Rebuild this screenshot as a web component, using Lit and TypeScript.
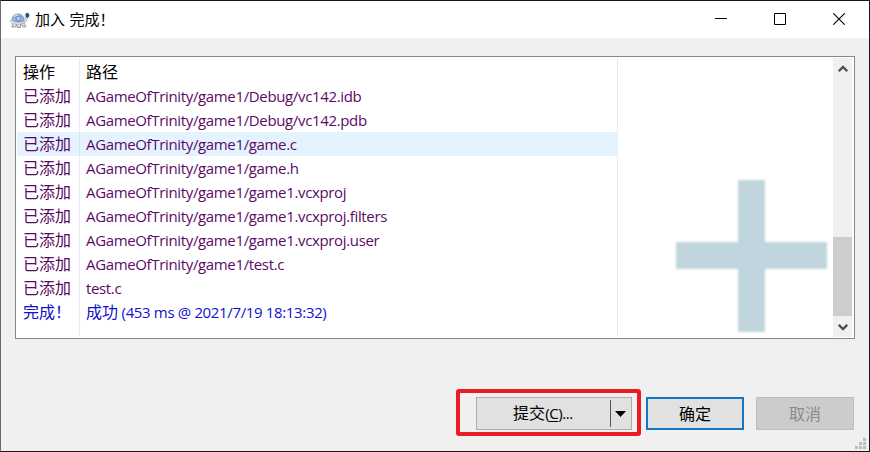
import { LitElement, html, css, svg } from "lit";
import { customElement } from "lit/decorators.js";
import { classMap } from "lit/directives/class-map.js";

interface Row {
  action: string;
  path: string;
  selected?: boolean;
}

const rows: Row[] = [
  { action: "已添加", path: "AGameOfTrinity/game1/Debug/vc142.idb" },
  { action: "已添加", path: "AGameOfTrinity/game1/Debug/vc142.pdb" },
  { action: "已添加", path: "AGameOfTrinity/game1/game.c", selected: true },
  { action: "已添加", path: "AGameOfTrinity/game1/game.h" },
  { action: "已添加", path: "AGameOfTrinity/game1/game1.vcxproj" },
  { action: "已添加", path: "AGameOfTrinity/game1/game1.vcxproj.filters" },
  { action: "已添加", path: "AGameOfTrinity/game1/game1.vcxproj.user" },
  { action: "已添加", path: "AGameOfTrinity/game1/test.c" },
  { action: "已添加", path: "test.c" },
];

const grip = [
  [8, 0], [4, 4], [8, 4], [0, 8], [4, 8], [8, 8],
];

@customElement("app-root")
export class AppRoot extends LitElement {
  static styles = css`
    :host {
      display: block;
      width: 870px;
      height: 452px;
      font: 16px/22px "Noto Sans CJK SC", sans-serif;
      color: #000;
    }
    * { box-sizing: border-box; }
    svg { display: block; }
    .window {
      position: relative;
      display: flex;
      flex-direction: column;
      height: 452px;
      overflow: hidden;
      background: #f0f0f0;
      border: 1px solid #17181a;
      border-left-color: #6a6a6a;
    }
    .title {
      display: flex;
      align-items: center;
      height: 37px;
      flex: none;
      background: #fff;
      padding-left: 8px;
    }
    .caption { margin: -1px 0 0 5px; font-size: 15px; white-space: pre; flex: 1; }
    .caption .gap { margin-right: 1px; }
    .controls { display: flex; margin: -1px 1px 0 0; }
    .control {
      width: 59px;
      height: 37px;
      display: grid;
      place-items: center;
    }
    .list {
      display: flex;
      position: relative;
      width: 840px;
      height: 283px;
      margin: 18px 0 0 14px;
      padding: 1px;
      flex: none;
      background: #fff;
      border: 1px solid #828790;
    }
    .table {
      width: 601px;
      padding-top: 2px;
      border-right: 1px solid #e5ecf5;
      background: linear-gradient(#e5ecf5, #e5ecf5) 62px 0 / 1px 100% no-repeat;
    }
    .row {
      display: grid;
      grid-template-columns: 63px 1fr;
      height: 24px;
      white-space: pre;
      color: #5a0a64;
    }
    .row.head { color: #000; }
    .row.done { color: #1010d0; }
    .row.selected {
      background: linear-gradient(#d5e6f8, #d5e6f8) 62px 0 / 1px 100% no-repeat, #e5f3ff;
      margin-right: -1px;
    }
    .action { padding-left: 6px; }
    .path { padding-left: 6px; }
    .latin {
      font-family: "Open Sans", "Noto Sans CJK SC", sans-serif;
      font-size: 15px;
      letter-spacing: -0.35px;
    }
    .rest { flex: 1; }
    .plus {
      position: absolute;
      left: 659px;
      top: 122px;
      filter: blur(0.8px);
    }
    .scroll {
      display: flex;
      flex-direction: column;
      width: 19px;
      margin-right: 1px;
      background: #f0f0f0;
    }
    .arrow { height: 21px; display: grid; place-items: center; }
    .track { flex: 1; display: flex; flex-direction: column; justify-content: flex-end; }
    .thumb { height: 79px; background: #cdcdcd; }
    .footer {
      display: flex;
      justify-content: flex-end;
      align-items: flex-start;
      margin: 50px 15px 0 0;
    }
    .mark {
      width: 185px;
      height: 47px;
      border: 4px solid #e81c24;
      border-radius: 3px;
      padding: 4px 0 0 16px;
      margin-right: 5px;
    }
    .button {
      width: 98px;
      height: 33px;
      display: flex;
      align-items: center;
      justify-content: center;
      background: #e1e1e1;
      border: 1px solid #adadad;
      padding-bottom: 2px;
    }
    .button.split { width: 156px; justify-content: flex-start; padding-bottom: 0; }
    .button.ok { margin-top: 8px; border: 2px solid #1277c6; }
    .button.cancel {
      margin: 8px 0 0 12px;
      background: #ccc;
      border-color: #bfbfbf;
      color: #8b8b8b;
    }
    .label { width: 132px; text-align: center; margin-top: -2px; }
    .label .latin { letter-spacing: -0.4px; }
    .key { text-decoration: underline; text-underline-offset: 2px; text-decoration-thickness: 1px; }
    .drop {
      flex: 1;
      height: 27px;
      margin-left: 1px;
      border-left: 1px solid #555;
      display: flex;
      align-items: center;
      padding: 1px 0 0 4px;
    }
    .grip { position: absolute; right: 3px; bottom: 2px; }
  `;

  private turtle() {
    return html`<svg width="21" height="18" viewBox="0 0 21 18">
      <path d="M4 12L2.800 16H6.500L8 13z M8 12.500V16.500H11.500V12.500z M12 12.500L14 16H17L15 12z" fill="#dadde2" stroke="#858b96" stroke-width=".8" />
      <path d="M14 10.500Q16 9.500 16 6.500L18.500 7Q18 11.500 14.500 12z" fill="#e3e6eb" stroke="#9aa2ae" stroke-width=".6" />
      <path d="M3 10Q3 3 9 3T15 10Q9 12.500 3 10z" fill="#9db6e2" stroke="#7085ad" stroke-width=".8" />
      <path d="M7 6.500L9.500 5L12 6.500V8.500L9.500 10L7 8.500z" fill="#b9cdf0" stroke="#5b7ec4" />
      <path d="M5 5.500Q7 3.500 9 4" fill="none" stroke="#e2ebfa" />
      <path d="M1 9.500Q3 8.500 4.500 10.500Q9 12.500 14.500 10.500L15.500 12Q9 14.500 3 12.500z" fill="#eceef1" stroke="#9aa0a9" stroke-width=".6" />
      <ellipse cx="18.300" cy="4.300" rx="2" ry="2.500" fill="#1d5578" />
      <path d="M16.300 2.500V6" stroke="#9bbfd6" />
    </svg>`;
  }

  private chevron(d: string) {
    return html`<svg width="10" height="8" viewBox="0 0 10 8">
      <path d=${d} fill="none" stroke="#505050" stroke-width="2.300" />
    </svg>`;
  }

  render() {
    return html`
      <div class="window">
        <div class="title">
          ${this.turtle()}
          <span class="caption"><span class="gap">加入 </span>完成！</span>
          <div class="controls">
            <div class="control"><svg width="12" height="12"><path d="M0 5.500H12" stroke="#000" /></svg></div>
            <div class="control"><svg width="12" height="12"><path d="M.5.5h11v11H.5z" fill="none" stroke="#000" /></svg></div>
            <div class="control"><svg width="12" height="12"><path d="M.3.3L11.700 11.700M11.700.3L.3 11.700" stroke="#000" stroke-width="1.100" /></svg></div>
          </div>
        </div>
        <div class="list">
          <div class="table">
            <div class="row head"><span class="action">操作</span><span class="path">路径</span></div>
            ${rows.map((r) => html`
              <div class=${classMap({ row: true, selected: !!r.selected })}>
                <span class="action">${r.action}</span>
                <span class="path"><span class="latin">${r.path}</span></span>
              </div>`)}
            <div class="row done">
              <span class="action">完成！</span>
              <span class="path">成功<span class="latin"> (453 ms @ 2021/7/19 18:13:32)</span></span>
            </div>
          </div>
          <div class="rest"></div>
          <svg class="plus" width="154" height="154">
            <path d="M63 1h27v62h62v27H90v63H63V90H1V63h62z" fill="#c1d5de" />
          </svg>
          <div class="scroll">
            <div class="arrow">${this.chevron("M.8 6.200L5 2L9.200 6.200")}</div>
            <div class="track"><div class="thumb"></div></div>
            <div class="arrow">${this.chevron("M.8 1.800L5 6L9.200 1.800")}</div>
          </div>
        </div>
        <div class="footer">
          <div class="mark">
            <div class="button split">
              <span class="label">提交<span class="latin">(<span class="key">C</span>)...</span></span>
              <span class="drop"><svg width="11" height="6"><path d="M0 0H11L5.500 6z" fill="#000" /></svg></span>
            </div>
          </div>
          <div class="button ok">确定</div>
          <div class="button cancel">取消</div>
        </div>
        <svg class="grip" width="11" height="11">
          ${grip.map(([x, y]) => svg`<rect x=${x} y=${y} width="3" height="3" fill="#bdbdbd" />`)}
        </svg>
      </div>
    `;
  }
}
